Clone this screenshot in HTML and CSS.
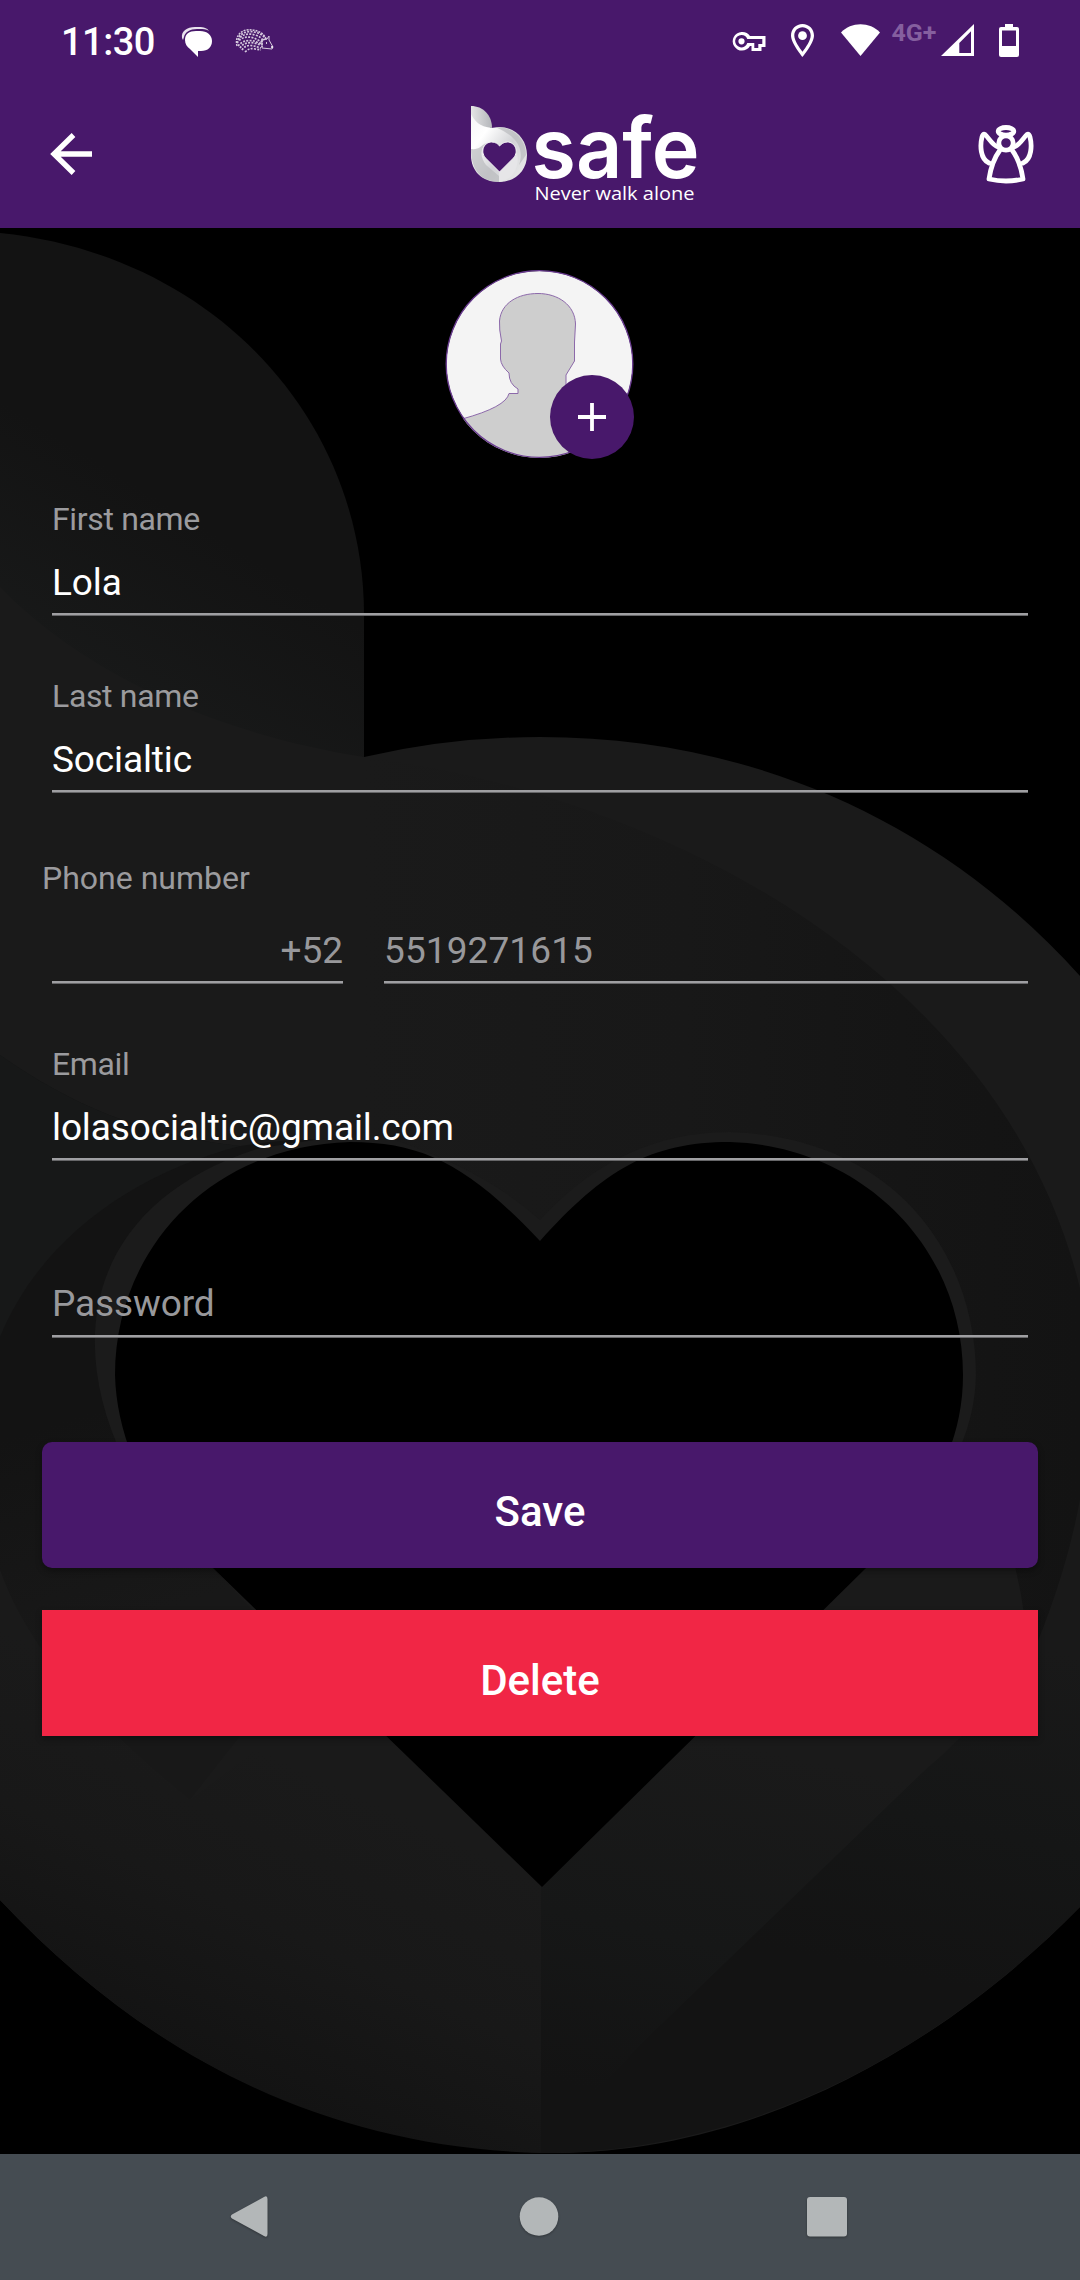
FILE: index.html
```html
<!DOCTYPE html>
<html lang="en">
<head>
<meta charset="utf-8">
<title>bSafe – Profile</title>
<link rel="stylesheet" href="styles.css">
</head>
<body>
<div class="screen">
  <header class="top">
    <div class="status">
      <span class="clock">11:30</span>
      <svg class="chat" viewBox="0 0 32 32" width="32" height="32"><path d="M1 12C0 5 6 1 14 1h4c5 0 8 1 10 4-3-2-6-2-9-2h-3C9 3 4 6 3 11l-1 3z" fill="#e9e2ee"/><path d="M4 14C4 8 8 5 15 5h4c7 0 12 4 12 10s-4 10-11 10h-3v6l-8-8c-3-2-5-5-5-9z" fill="#fff"/></svg>
      <svg class="hedgehog" viewBox="0 0 40 26" width="40" height="26" fill="none" stroke="#d6cade"><path d="M3 18C1 10 5 3 13 2c9-1 17 3 19 9l-4 1v7" stroke-width="1.5" stroke-dasharray="2 1"/><path d="M5 9C8 4 15 3 20 4s9 3 12 7M4 12c4-6 11-7 17-5 4 1 6 3 8 5M3 15c4-6 10-7 17-5l8 4M4 18c5-6 11-6 16-5l8 3M6 20c3-5 9-6 14-5l7 2M8 22c3-5 8-5 12-4l7 2M11 24c3-3 6-4 10-3l6 1" stroke-width="1.700" stroke-dasharray="2 1.300"/><path d="M28 12l5-1 2-3v4l4 7-1 2-10-1z" stroke-width="1"/><path d="M32 15h1M37 19h2" stroke="#fff" stroke-width="1.400"/></svg>
      <svg class="sys" viewBox="0 0 296 40" width="296" height="40">
        <g fill="#fff">
          <path fill-rule="evenodd" d="M9.500 8a9.300 9.300 0 0 1 8.500 4h15.500v11h-4v4h-10v-5h-1.500A9.300 9.300 0 1 1 9.500 8zm0 3a6.200 6.200 0 1 0 5.800 8h7v5h4v-4h4v-5H15.300a6.200 6.200 0 0 0-5.800-4zm0 3.200a3.100 3.100 0 1 1 0 6.200 3.100 3.100 0 0 1 0-6.200z"/>
          <path fill-rule="evenodd" d="M70.500 0C77 0 82 5 82 11.500c0 8-11.500 21.500-11.500 21.500S59 19.500 59 11.500C59 5 64 0 70.500 0zm0 3.200c-4.600 0-8.200 3.600-8.200 8.200 0 5 5 12 8.200 16.300 3.200-4.300 8.200-11.300 8.200-16.300 0-4.600-3.600-8.200-8.200-8.200z"/><circle cx="70.500" cy="11.700" r="4.400"/>
          <path d="M109 8.500C119-2.500 138-2.500 148 8.500L128.500 32z"/>
          <path fill-rule="evenodd" d="M242 0v32h-33zM239 7.300L227.300 19v10H239z"/>
          <path fill-rule="evenodd" d="M273 0h8v3h4q2 0 2 2v26q0 2-2 2h-16q-2 0-2-2V5q0-2 2-2h4zM270 6.500V22h14V6.500z"/>
        </g>
        <text class="network" x="159.500" y="17" textLength="45" lengthAdjust="spacingAndGlyphs">4G+</text>
      </svg>
    </div>
    <div class="toolbar">
      <svg class="back" viewBox="0 0 42 42" width="42" height="42"><path d="M23.500 2L4 21l19.500 19M4 21h38" fill="none" stroke="#fff" stroke-width="5.300"/></svg>
      <svg class="logo" viewBox="470 100 230 104" width="230" height="104">
        <defs>
          <linearGradient id="silver" x1="0" y1="0" x2="1" y2="1"><stop stop-color="#f4f4f5"/><stop offset=".3" stop-color="#fff"/><stop offset=".6" stop-color="#d2d3d6"/><stop offset="1" stop-color="#eee"/></linearGradient>
          <linearGradient id="leaf" x1="0" x2="1"><stop stop-color="#e5e5e6"/><stop offset="1" stop-color="#b4b6ba"/></linearGradient>
        </defs>
        <path fill="url(#silver)" d="M471 106v49c0 16 11 27 28 27s28-12 28-27-11-28-28-28l-8 1z"/>
        <path fill="url(#leaf)" d="M471 106c12 0 21 9 21 22-13-1-18-8-21-14z"/>
        <path fill="#b9babd" opacity=".7" d="M495 127c18-1 31 12 31 28l-7 10c4-12 3-27-24-38zM471 149c8 1 10-3 15-6-7 8-5 15 0 22l13 11v6c-20-1-28-14-28-33z"/>
        <path fill="#e6e6e8" d="M499 182v-11l18-18c3 14-4 27-18 29z"/>
        <path fill="#48186b" stroke="#f6f6f7" stroke-width="1" d="M499.500 172l-14-14c-6-7-1-16 6-16 4 0 7 2 8 4 2-2 4-4 8-4 7 0 12 9 6 16z"/>
        <text class="brand" x="531.500" y="178" textLength="168" lengthAdjust="spacingAndGlyphs">safe</text>
        <text class="tagline" x="534.500" y="200" textLength="160" lengthAdjust="spacingAndGlyphs">Never walk alone</text>
      </svg>
      <svg class="angel" viewBox="0 0 56 60" width="56" height="60" fill="none" stroke="#fff" stroke-width="4.800" stroke-linecap="round" stroke-linejoin="round"><ellipse cx="28" cy="6.300" rx="7.800" ry="3.800"/><circle cx="28" cy="18" r="7.200"/><path d="M22 25C16 33 13 41 11 54q17 4 34 0C43 41 40 33 34 25"/><path d="M20 22C14 20 11 13 7 9.500 5.500 8.500 4.500 10 4 12 2 20 2 34 11 38M36 22c6-2 9-9 13-12.500 1.500-1 2.500.5 3 2.500 2 8 2 22-7 26"/></svg>
    </div>
  </header>

  <main class="content">
    <svg class="backdrop" viewBox="0 228 1080 1926" width="1080" height="1926">
      <defs>
        <linearGradient id="arc" gradientUnits="userSpaceOnUse" x1="364" y1="0" x2="1080" y2="0"><stop stop-color="#1a1a1a"/><stop offset=".45" stop-color="#181818"/><stop offset=".75" stop-color="#151515"/><stop offset="1" stop-color="#131313"/></linearGradient>
        <linearGradient id="lowerRight" gradientUnits="userSpaceOnUse" x1="720" y1="1740" x2="640" y2="2100"><stop stop-color="#1a1a1a"/><stop offset=".55" stop-color="#161717"/><stop offset="1" stop-color="#131313"/></linearGradient>
        <linearGradient id="outerRight" gradientUnits="userSpaceOnUse" x1="1000" y1="1640" x2="930" y2="1980"><stop stop-color="#191919"/><stop offset=".55" stop-color="#151616"/><stop offset="1" stop-color="#131313"/></linearGradient>
        <linearGradient id="lowerLeft" gradientUnits="userSpaceOnUse" x1="240" y1="1740" x2="110" y2="2020"><stop stop-color="#1a1a1a"/><stop offset=".5" stop-color="#181818"/><stop offset="1" stop-color="#131313"/></linearGradient>
        <linearGradient id="petal" gradientUnits="userSpaceOnUse" x1="160" y1="500" x2="60" y2="660"><stop stop-color="#131313"/><stop offset="1" stop-color="#181919"/></linearGradient>
        <linearGradient id="hollow" gradientUnits="userSpaceOnUse" x1="0" y1="1440" x2="60" y2="1640"><stop stop-color="#131313"/><stop offset="1" stop-color="#181818"/></linearGradient>
      </defs>
      <path fill="#1a1a1a" d="M0 560L364 757Q450 737 540 737C750 737 940 820 1080 976V1907C930 2060 740 2153 555 2153C330 2148 150 2060 0 1900z"/>
      <path fill="url(#petal)" d="M0 233C215 255 364 420 364 615V757C210 733 80 670 0 587z"/>
      <path fill="url(#lowerLeft)" d="M0 1570C25 1640 80 1710 190 1800L268 1740L542 1887V2153C330 2148 150 2060 0 1900z"/>
      <path fill="url(#outerRight)" d="M1080 1440V1907C930 2060 740 2153 541 2153V2100L925 1770L1030 1640z"/>
      <path fill="url(#lowerRight)" d="M541 1887L866 1568L1016 1568L1026 1610Q1020 1690 925 1770L640 2045Q590 2100 541 2150z"/>
      <path fill="url(#arc)" d="M364 757C640 790 1000 960 1080 1288V1500Q1065 1580 1028 1665Q1026 1600 1010 1550L954 1441L730 1150L540 1220L340 1132z"/>
      <path fill="url(#hollow)" d="M0 1055C70 1104 140 1135 240 1146Q310 1135 350 1142L120 1460L213 1568L300 1660L190 1800C80 1710 25 1640 0 1570z"/>
      <path fill="#171818" d="M0 1055C70 1104 140 1135 240 1146C130 1175 40 1240 0 1337z"/>
      <path fill="#1b1b1b" d="M256 1612L213 1568L124 1460C62 1330 95 1200 260 1148L370 1132Q480 1165 540 1220Q620 1132 730 1132C900 1138 976 1260 976 1375Q975 1420 954 1460L866 1568z"/>
      <path fill="#000" d="M540 1241C470 1167 425 1142 350 1142C210 1146 115 1250 115 1375C117 1455 165 1530 213 1568L542 1887L866 1568C925 1510 963 1450 963 1375C963 1245 860 1146 730 1142C650 1142 604 1170 540 1241z"/>
    </svg>

    <div class="avatar">
      <svg viewBox="0 0 190 190" width="190" height="190">
        <defs><clipPath id="round"><circle cx="94.500" cy="95" r="94"/></clipPath></defs>
        <circle cx="94.500" cy="95" r="93" fill="#f4f4f4"/>
        <path clip-path="url(#round)" fill="#cecece" stroke="#8c69aa" d="M17 150Q61 138 64 124.500H73V120Q64 115 64 104Q56 97 55.500 90V75L56.500 72Q54 60 54.500 52C56 34 73 24.500 93 24.500S130 36 130.500 55L129.500 73V92L121 106V118L190 160V195H10z"/>
        <circle cx="94.500" cy="95" r="93.300" fill="none" stroke="#6b3c92" stroke-width="1.300"/>
      </svg>
      <span class="add"><svg viewBox="0 0 28 28" width="28" height="28"><path d="M14 0v28M0 14h28" stroke="#fff" stroke-width="3.800"/></svg></span>
    </div>

    <form class="form">
      <div class="field"><span class="label">First name</span><span class="value">Lola</span></div>
      <div class="field"><span class="label">Last name</span><span class="value">Socialtic</span></div>
      <div class="phone">
        <span class="label">Phone number</span>
        <div class="phone-row"><span class="value muted code">+52</span><span class="value muted number">5519271615</span></div>
      </div>
      <div class="field"><span class="label">Email</span><span class="value">lolasocialtic@gmail.com</span></div>
      <div class="field"><span class="value muted hint">Password</span></div>
      <button class="btn save" type="button">Save</button>
      <button class="btn delete" type="button">Delete</button>
    </form>
  </main>

  <nav class="navbar">
    <svg viewBox="0 0 40 42" width="40" height="42"><path d="M2 18.500L34 1Q37.500-1 37.500 3V38Q37.500 42 34 40L2 22.500Q-.5 20.500 2 18.500z"/></svg>
    <svg viewBox="0 0 40 42" width="40" height="42"><circle cx="20" cy="20.500" r="19.300"/></svg>
    <svg viewBox="0 0 40 42" width="40" height="42"><rect y="1" width="40" height="39.500" rx="3"/></svg>
  </nav>
</div>
</body>
</html>
```
FILE: styles.css
```css
* { box-sizing: border-box; }

body {
  margin: 0;
  background: #000;
  font-family: Roboto, "Noto Sans", sans-serif;
}

.screen {
  width: 1080px;
  height: 2280px;
  display: flex;
  flex-direction: column;
  overflow: hidden;
}

svg { display: block; flex: none; overflow: visible; }

.top {
  height: 228px;
  background: #48186b;
  color: #fff;
}

.status {
  height: 82px;
  padding: 0 52px 0 61px;
  display: flex;
  align-items: flex-start;
}

.clock {
  width: 94px;
  margin-top: 19px;
  font-size: 38px;
  line-height: 46px;
  font-weight: 500;
  letter-spacing: -0.5px;
}

.chat { margin: 26px 0 0 26px; }
.hedgehog { margin: 28px 0 0 21px; }
.sys { margin: 24px 0 0 auto; }

.network {
  font: 700 24px Roboto, sans-serif;
  fill: #855f9f;
}

.toolbar {
  height: 146px;
  padding: 0 46px 0 50px;
  display: flex;
  align-items: flex-start;
}

.back { margin-top: 51px; }
.logo { margin: 18px 0 0 378px; }
.angel { margin: 43px 0 0 auto; }

.brand {
  font: 600 84px Inter, "Open Sans", sans-serif;
  fill: #fff;
}

.tagline {
  font: 400 19px "Open Sans", sans-serif;
  fill: #fff;
}

.content {
  position: relative;
  height: 1926px;
  padding-top: 41px;
}

.backdrop {
  position: absolute;
  top: 0;
  left: 0;
  z-index: -1;
}

.avatar {
  position: relative;
  width: 190px;
  height: 170px;
  margin-left: 445px;
}

.add {
  position: absolute;
  left: 105px;
  top: 106px;
  width: 84px;
  height: 84px;
  border-radius: 50%;
  background: #48186b;
  display: flex;
  align-items: center;
  justify-content: center;
}

.form {
  padding: 0 42px;
  display: flex;
  flex-direction: column;
}

.field {
  height: 177px;
  padding: 0 10px 1px;
  display: flex;
  flex-direction: column;
  justify-content: flex-end;
  gap: 22px;
}

.label {
  font-size: 32px;
  line-height: 38px;
  color: #9b9b9e;
}

.field .label { letter-spacing: -0.35px; }

.value {
  height: 55px;
  padding-top: 1px;
  font-size: 37px;
  line-height: 44px;
  letter-spacing: -0.12px;
  color: #fff;
  border-bottom: 2px solid #9f9fa2;
  box-shadow: 0 1px 0 #666668;
}

.muted { color: #98989b; }
.number { letter-spacing: 0.1px; }
.hint { height: 56px; }

.phone {
  height: 191px;
  padding-top: 66px;
  display: flex;
  flex-direction: column;
  gap: 31px;
}

.phone-row {
  padding: 0 10px;
  display: grid;
  grid-template-columns: 291px 1fr;
  gap: 41px;
}

.code { text-align: right; letter-spacing: 0; }

.btn {
  height: 126px;
  margin: 0 0 42px;
  padding: 14px 0 0;
  border: 0;
  color: #fff;
  font: 500 42px/50px Roboto, sans-serif;
  box-shadow: 0 3px 6px rgba(0, 0, 0, 0.35);
}

.save {
  margin-top: 104px;
  border-radius: 10px;
  background: #48186b;
}

.delete {
  padding-top: 15px;
  background: #f12645;
}

.navbar {
  height: 126px;
  padding: 42px 233px 0 230px;
  display: flex;
  justify-content: space-between;
  background: #454c52;
  fill: #b3b7b8;
}

.navbar svg { filter: drop-shadow(0 1px 1px rgba(0, 0, 0, 0.3)); }
```
